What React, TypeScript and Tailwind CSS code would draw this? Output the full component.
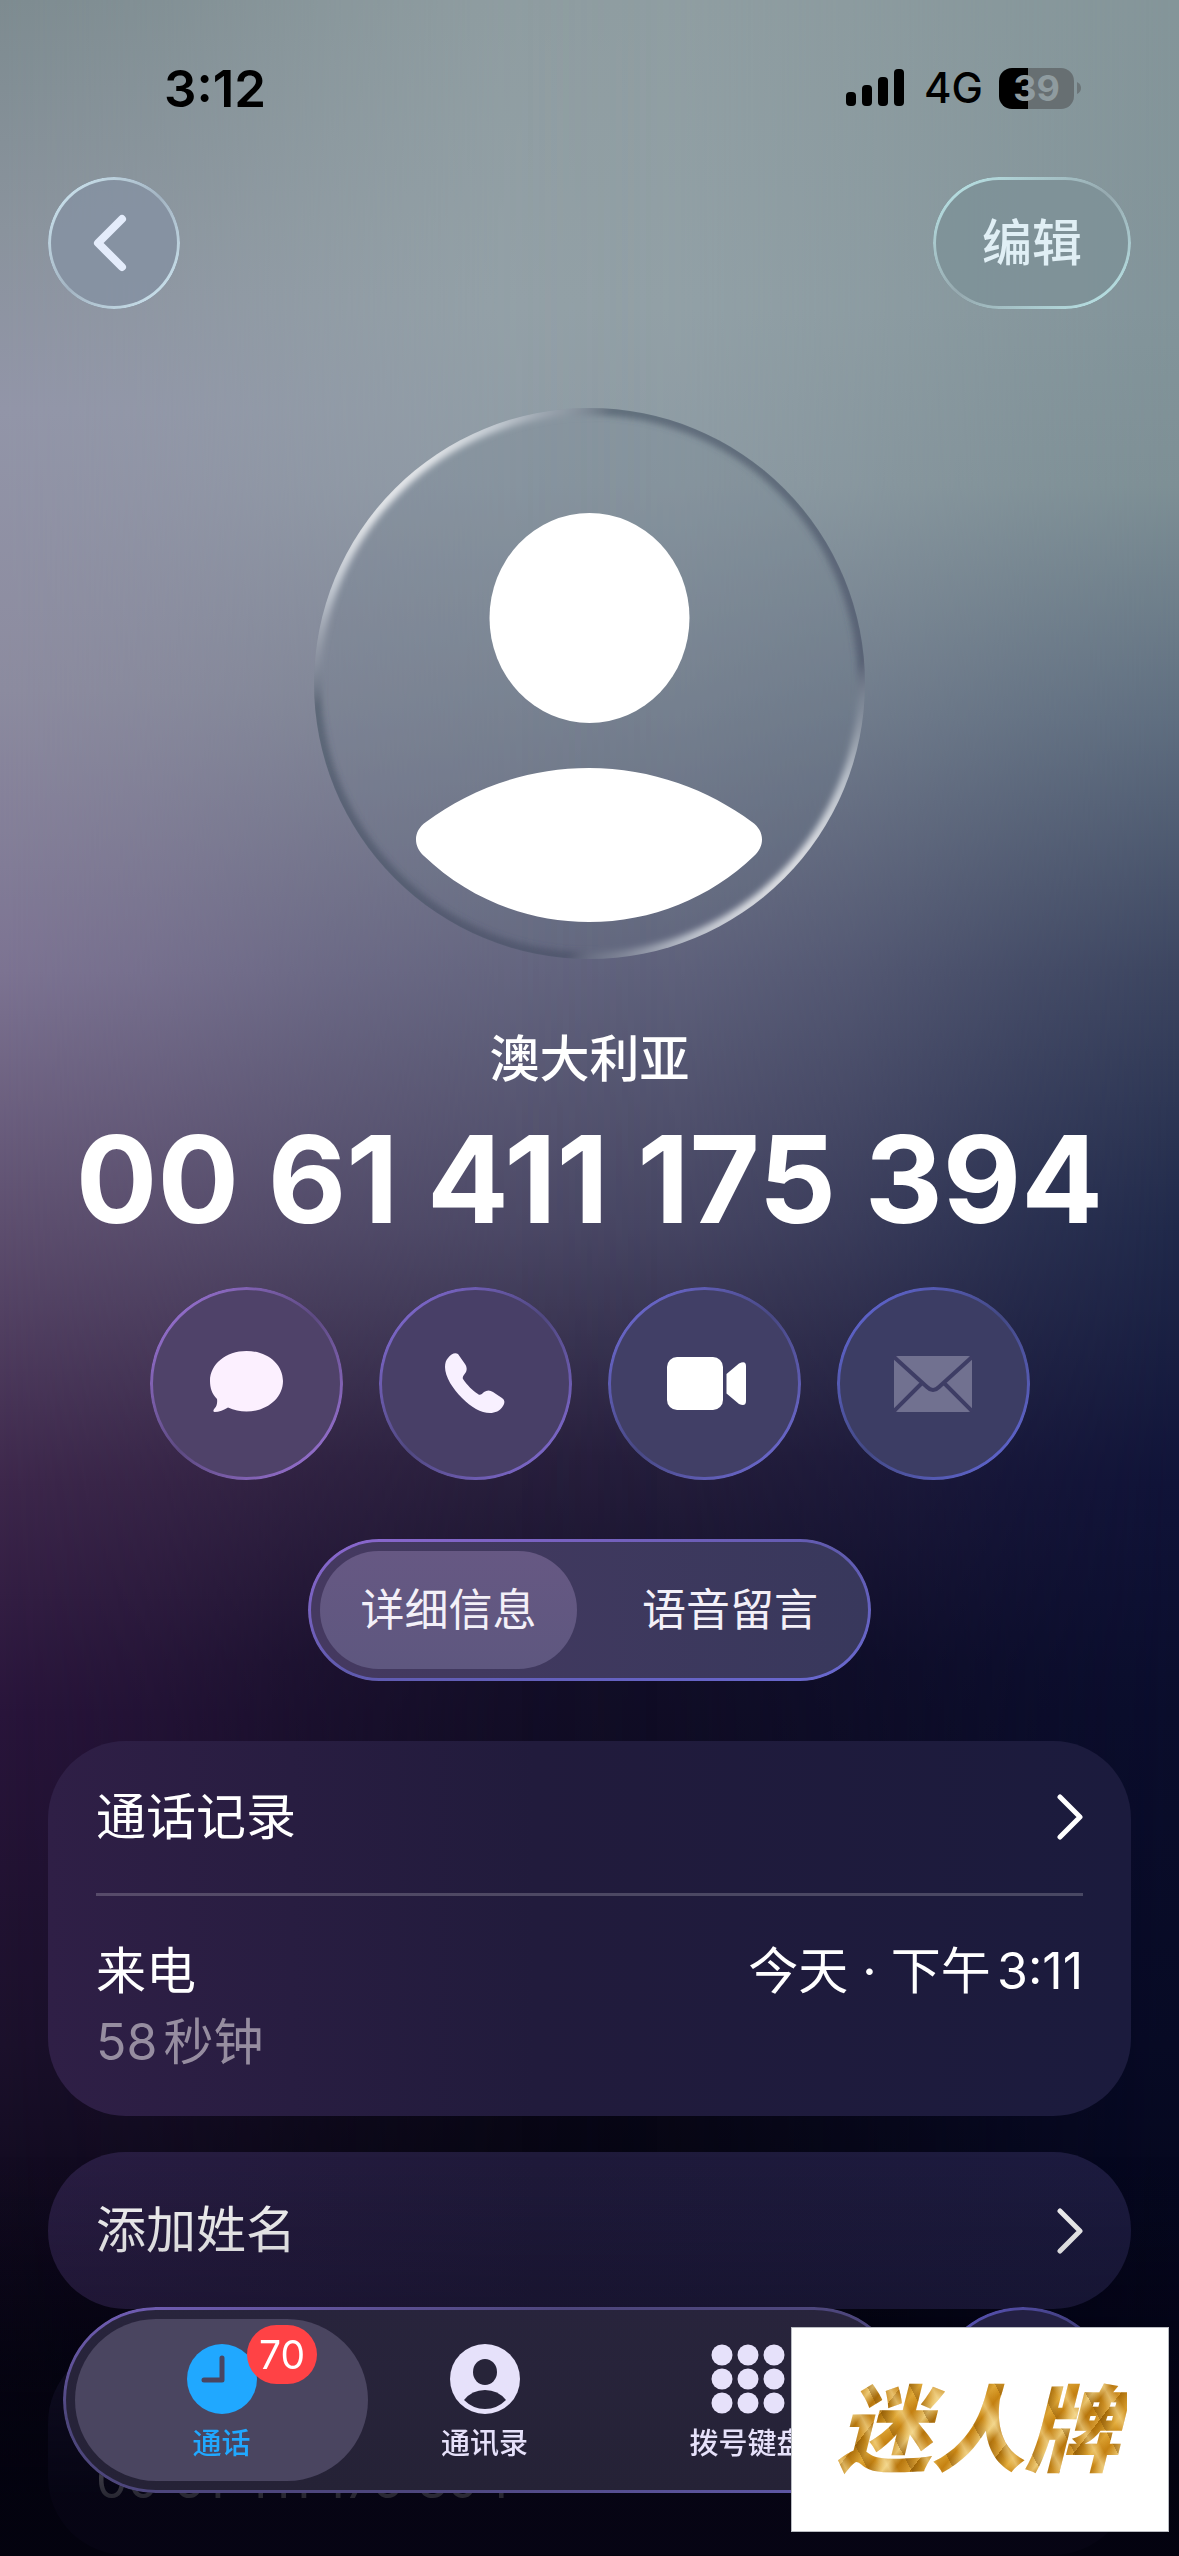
import React from "react";

const ring =
  "before:pointer-events-none before:absolute before:inset-0 before:rounded-[inherit] before:p-[3px] before:[mask:linear-gradient(#000_0_0)_content-box_exclude,linear-gradient(#000_0_0)]";

function Chevron() {
  return (
    <svg viewBox="0 0 26 46" className="h-[46px] w-[26px]" fill="none" stroke="white" strokeWidth="5" strokeLinecap="round" strokeLinejoin="round" aria-hidden="true">
      <path d="M3 3 L23 23 L3 43" />
    </svg>
  );
}

function StatusBar() {
  return (
    <div className="mt-[62px] flex h-[52px] items-center justify-between pr-[98px] pl-[164px] text-black">
      <span className="text-[51px] font-semibold leading-none">3:12</span>
      <div className="flex items-center">
        <svg viewBox="0 0 58 38" className="mr-5 h-[38px] w-[58px]" aria-hidden="true">
          <rect x="0" y="23" width="10" height="14" rx="4" />
          <rect x="16" y="16" width="10" height="21" rx="4" />
          <rect x="32" y="8" width="10" height="29" rx="4" />
          <rect x="48" y="0" width="10" height="37" rx="4" />
        </svg>
        <span className="mr-4 text-[42px] font-medium leading-none">4G</span>
        <div className="flex h-[41px] w-[75px] items-center justify-center rounded-[13px] bg-[linear-gradient(90deg,#000_39%,#676f72_39%)]">
          <span className="text-[36px] font-bold leading-none text-[#8f9b9f]">39</span>
        </div>
        <svg viewBox="0 0 7 14" className="h-[14px] w-[7px] fill-[#6c7578]" aria-hidden="true">
          <path d="M3 1 Q7 3 7 7 Q7 11 3 13 Z" />
        </svg>
      </div>
    </div>
  );
}

function NavBar() {
  return (
    <nav className="mt-[63px] flex items-center justify-between px-12">
      <button aria-label="返回" className={`relative flex size-[132px] items-center justify-center rounded-full bg-[#8591a3]/80 before:bg-[linear-gradient(to_bottom_right,#d3ecf6,#a3b4c2_50%,#d3ecf6)] ${ring}`}>
        <svg viewBox="0 0 34 58" className="mr-2 h-[58px] w-[34px]" fill="none" stroke="#e4ecfb" strokeWidth="8" strokeLinecap="round" strokeLinejoin="round" aria-hidden="true">
          <path d="M29 5 L5 29 L29 53" />
        </svg>
      </button>
      <button className={`relative h-[132px] w-[198px] rounded-full bg-[#7d9197]/80 text-[50px] font-medium text-[#e0eff5] before:bg-[linear-gradient(to_bottom_right,#bdeaec,#96a9af_50%,#bdeaec)] ${ring}`}>
        编辑
      </button>
    </nav>
  );
}

function Avatar() {
  return (
    <div className="relative mx-auto mt-[99px] size-[551px] overflow-hidden rounded-full bg-[#6b7a88]/20">
      <svg viewBox="0 0 551 551" className="size-full" aria-hidden="true">
        <defs>
          <linearGradient id="rim" x1="0" y1="0" x2="1" y2="1">
            <stop offset="0.14" stopColor="#fff" stopOpacity="0.85" />
            <stop offset="0.18" stopColor="#dde2e8" stopOpacity="0.7" />
            <stop offset="0.23" stopColor="#9aa0ac" stopOpacity="0.4" />
            <stop offset="0.27" stopColor="#465262" stopOpacity="0.6" />
            <stop offset="0.73" stopColor="#464b62" stopOpacity="0.6" />
            <stop offset="0.77" stopColor="#9aa0ac" stopOpacity="0.4" />
            <stop offset="0.82" stopColor="#dde2e8" stopOpacity="0.7" />
            <stop offset="0.86" stopColor="#fff" stopOpacity="0.85" />
          </linearGradient>
          <filter id="soft" x="-5%" y="-5%" width="110%" height="110%">
            <feGaussianBlur stdDeviation="3" />
          </filter>
        </defs>
        <circle cx="275.5" cy="275.5" r="274" fill="none" stroke="url(#rim)" strokeWidth="11" filter="url(#soft)" />
        <ellipse cx="275.5" cy="210" rx="100" ry="105" fill="#fff" />
        <path
          fill="#fff"
          d="M112 414 C155 382 212 360 275 360 C338 360 395 382 438 414 C451 423 451 438 440 448 C396 490 338 514 275 514 C212 514 154 490 110 448 C99 438 99 423 112 414 Z"
        />
      </svg>
    </div>
  );
}

function Actions() {
  const base = "relative flex size-[193px] items-center justify-center rounded-full disabled:cursor-default";
  return (
    <div className="mt-12 flex justify-center gap-9">
      <button aria-label="信息" className={`${base} bg-[#4f4269] before:bg-[linear-gradient(to_bottom_right,#a479e2,#5d4a82_50%,#a479e2)] ${ring}`}>
        <svg viewBox="0 0 73 61" className="mb-1 h-[61px] w-[73px] fill-[#fcf0ff]" aria-hidden="true">
          <path d="M36.5 0 C57 0 73 13 73 30 C73 47 57 60.500 36.500 60.500 C30 60.500 24 59 18 56.500 C14 59 9 61 4.500 61 C3 61 3 59 4.500 57.500 C7 55 7.500 51 7 48 C2 43 0 37 0 30 C0 13 16 0 36.500 0 Z" />
        </svg>
      </button>
      <button aria-label="呼叫" className={`${base} bg-[#483f67] before:bg-[linear-gradient(to_bottom_right,#8a70e0,#504881_50%,#8a70e0)] ${ring}`}>
        <svg viewBox="0 0 60 61" className="h-[61px] w-[60px] fill-[#f8f0ff]" aria-hidden="true">
          <path d="M3 5 C6 1 10 -1 13 1 L20 11 C22 14 22 17 21 19 C19 22 17 24 18 26 C22 32 28 38 33 41 C35 43 37 41 39 39 C42 37 45 37 48 39 L57 45 C60 47 60 50 58 53 C55 58 50 60 45 60 C36 60 26 54 17 45 C8 36 0 24 0 14 C0 10 1 7 3 5 Z" />
        </svg>
      </button>
      <button aria-label="视频" className={`${base} bg-[#413f66] before:bg-[linear-gradient(to_bottom_right,#7470e0,#484884_50%,#7470e0)] ${ring}`}>
        <svg viewBox="0 0 79 53" className="ml-1 h-[53px] w-[79px] fill-white" aria-hidden="true">
          <rect width="56" height="53" rx="10" />
          <path d="M59.500 17 L72 6.500 Q79 3 79 9 V44 Q79 50 72 47 L59.500 36.500 Z" />
        </svg>
      </button>
      <button aria-label="邮件" disabled className={`${base} bg-[#3c3d64] before:bg-[linear-gradient(to_bottom_right,#666be0,#434985_50%,#666be0)] ${ring}`}>
        <svg viewBox="0 0 78 56" className="h-[56px] w-[78px]" aria-hidden="true">
          <rect width="78" height="56" rx="4" fill="#717190" />
          <path d="M0 1 L33 31 Q39 37 45 31 L78 1 M0 55 L28 27 M78 55 L50 27" fill="none" stroke="#3e3d65" strokeWidth="4" />
        </svg>
      </button>
    </div>
  );
}

function Segments() {
  return (
    <div role="tablist" className={`relative mx-auto mt-[59px] flex h-[142px] w-[563px] rounded-full bg-[linear-gradient(90deg,#453960,#38385c)] p-3 text-[44px] text-[#f3f0f8] before:bg-[linear-gradient(to_bottom_right,#8d68d0,#5f5aae_50%,#6a69d2)] ${ring}`}>
      <button role="tab" aria-selected="true" className="w-[257px] rounded-full bg-[linear-gradient(180deg,#665883,#5e577f)]">
        详细信息
      </button>
      <button role="tab" aria-selected="false" className="flex-1 pl-6">
        语音留言
      </button>
    </div>
  );
}

function Cards() {
  return (
    <main className="mt-[60px] flex flex-col gap-9 px-12 text-[50px] text-white [text-autospace:normal]">
      <section className="rounded-[78px] bg-[linear-gradient(90deg,#2f1f46,#211b3c_45%,#1b1b3d)] px-12">
        <button className="flex h-[152px] w-full items-center justify-between">
          <span>通话记录</span>
          <Chevron />
        </button>
        <div className="flex justify-between border-t-[3px] border-white/20 pt-10 pb-[38px] leading-[71px]">
          <div>
            <div>来电</div>
            <div className="text-[#968da0]">58秒钟</div>
          </div>
          <div>今天 · 下午3:11</div>
        </div>
      </section>
      <section className="rounded-[78px] bg-[linear-gradient(90deg,#291d42,#1f1a3a_45%,#1c1b3f)] px-12">
        <button className="flex h-[157px] w-full items-center justify-between">
          <span>添加姓名</span>
          <Chevron />
        </button>
      </section>
      <section className="rounded-[78px] bg-[#15122a] px-12 pt-[100px] pb-[39px] leading-[71px]">
        <div>00 61 411 175 394</div>
      </section>
    </main>
  );
}

function TabBar() {
  const item = "relative flex h-full w-[293px] shrink-0 flex-col items-center rounded-full pt-[25px] text-[29px] font-medium leading-none";
  return (
    <div className="fixed inset-x-[63px] bottom-[63px] flex h-[186px] justify-between">
      <nav className={`relative flex w-[844px] rounded-full bg-[linear-gradient(180deg,#28243c,#252236)] p-3 text-[#e6e1fa] before:bg-[linear-gradient(to_bottom_right,#7560bb,#4d467c_30%,#4d467c_70%,#635cb0)] ${ring}`}>
        <a href="#calls" className={`${item} bg-[#4a4560] text-[#20a8ff]`}>
          <svg viewBox="0 0 70 70" className="size-[70px]" aria-hidden="true">
            <circle cx="35" cy="35" r="35" fill="#20a8ff" />
            <path d="M35 14 V36 H17" fill="none" stroke="#4a4560" strokeWidth="5" strokeLinecap="round" strokeLinejoin="round" />
          </svg>
          <span className="mt-[15px]">通话</span>
          <span className="absolute top-1.5 left-[172px] flex h-[59px] w-[70px] items-center justify-center rounded-full bg-[#ff4245] text-[39px] font-normal text-white">70</span>
        </a>
        <a href="#contacts" className={`${item} -ml-[30px]`}>
          <svg viewBox="0 0 70 70" className="size-[70px]" aria-hidden="true">
            <circle cx="35" cy="35" r="35" fill="#e6e1fa" />
            <ellipse cx="35" cy="28" rx="12" ry="13" fill="#272439" />
            <path d="M14 56 Q22 46 35 46 Q48 46 56 56 Q47 65 35 65 Q23 65 14 56 Z" fill="#272439" />
          </svg>
          <span className="mt-[15px]">通讯录</span>
        </a>
        <a href="#keypad" className={`${item} -ml-[30px]`}>
          <svg viewBox="0 0 74 70" className="h-[70px] w-[74px] fill-[#e6e1fa]" aria-hidden="true">
            {[11, 37, 63].map((x) => [11, 35, 59].map((y) => <circle key={`${x}-${y}`} cx={x} cy={y} r="10.5" />))}
          </svg>
          <span className="mt-[15px]">拨号键盘</span>
        </a>
      </nav>
      <button aria-label="搜索" className={`relative size-[186px] rounded-full bg-[#232042] before:bg-[linear-gradient(to_bottom_right,#5f59c4,#3d3a74_50%,#5f59c4)] ${ring}`} />
    </div>
  );
}

export default function App() {
  return (
    <div className="relative isolate min-h-screen overflow-hidden font-['Inter','Noto_Sans_CJK_SC',sans-serif]">
      <div className="absolute inset-0 -z-10 bg-[linear-gradient(180deg,#919fa3_0%,#94a2a8_12%,#8f9ca5_19%,#7b8493_28%,#62647e_38%,#4a4865_48%,#271f3c_57%,#120e27_65%,#0a0819_78%,#020208_95%)]" />
      <div className="absolute inset-0 -z-10 bg-[linear-gradient(180deg,#7d8b90_0%,#8a939d_9%,#9295a8_16%,#8c8b9f_27%,#7c7392_38%,#5d4e6e_48%,#3d274b_58%,#28143a_67%,#1b102b_80%,#060412_93%,#020208_100%)] [mask-image:linear-gradient(90deg,#000,#000000c0_13%,#00000060_28%,#0000001c_42%,transparent_56%)]" />
      <div className="absolute inset-0 -z-10 bg-[linear-gradient(180deg,#849599_0%,#82949a_12%,#7d8f95_19%,#5f6e80_28%,#3c4560_38%,#20294a_48%,#101338_58%,#0a0d2c_67%,#070a25_80%,#030418_93%,#020210_100%)] [mask-image:linear-gradient(270deg,#000,#000000c0_13%,#00000060_28%,#0000001c_42%,transparent_56%)]" />
      <StatusBar />
      <NavBar />
      <Avatar />
      <h1 className="mt-[70px] text-center text-[50px] font-medium leading-[60px] text-white">澳大利亚</h1>
      <p className="mt-[30px] text-center text-[121px] font-bold leading-[120px] whitespace-nowrap text-white">00 61 411 175 394</p>
      <Actions />
      <Segments />
      <Cards />
      <div className="pointer-events-none fixed inset-x-0 bottom-0 h-[400px] bg-[linear-gradient(180deg,transparent,#04031040_40%,#040310d9_85%)]" />
      <TabBar />
      <aside className="fixed right-[10px] bottom-6 flex h-[205px] w-[378px] items-center justify-center border border-[#b9bcc2] bg-white pr-1">
        <span className="bg-[repeating-linear-gradient(62deg,#7a4a0466_0px,#e8b84800_11px,#f7e0a088_19px,#b8720a55_27px,#e8b84800_38px),repeating-linear-gradient(128deg,#a86c08_0px,#e2ab3a_14px,#c98614_24px,#f0cf7c_37px,#b8780e_46px,#dba238_59px)] bg-clip-text px-2 text-[94px] font-black italic leading-none text-transparent">迷人牌</span>
      </aside>
    </div>
  );
}
